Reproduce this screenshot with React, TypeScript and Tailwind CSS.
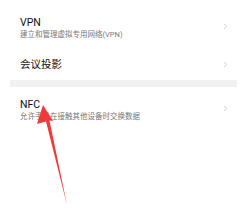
import React from 'react';

const Chevron = () => (
  <svg width="5" height="7" viewBox="0 0 5 7" className="shrink-0">
    <path d="M1 1 L3.8 3.5 L1 6" fill="none" stroke="#d4d4d4" strokeWidth="1" />
  </svg>
);

const App: React.FC = () => {
  return (
    <div
      className="relative w-[252px] h-[212px] overflow-hidden bg-white"
      style={{ fontFamily: '"Roboto", "Noto Sans CJK SC", sans-serif' }}
    >
      {/* VPN */}
      <div className="flex h-[48px] items-start justify-between pl-[20px] pr-[24px] pt-[16px]">
        <div className="flex flex-col">
          <span className="text-[10.5px] leading-[13px] text-[#111]">VPN</span>
          <span className="mt-[1px] text-[7.5px] leading-[10px] text-[#777]">建立和管理虚拟专用网络(VPN)</span>
        </div>
        <div className="pt-[7px]">
          <Chevron />
        </div>
      </div>

      {/* 会议投影 */}
      <div className="flex h-[32px] items-center justify-between pl-[20px] pr-[24px]">
        <span className="text-[10.5px] leading-[13px] text-[#111]">会议投影</span>
        <Chevron />
      </div>

      {/* divider band */}
      <div className="mx-[10px] h-[7px] w-[227px] bg-[#f1f1f1]" />

      {/* NFC */}
      <div className="flex items-start justify-between pl-[20px] pr-[24px] pt-[11px]">
        <div className="flex flex-col">
          <span className="text-[10.5px] leading-[13px] text-[#111]">NFC</span>
          <span className="mt-[1px] text-[7.5px] leading-[10px] text-[#777]">允许手机在接触其他设备时交换数据</span>
        </div>
        <div className="pt-[7px]">
          <Chevron />
        </div>
      </div>

      {/* red arrow annotation */}
      <svg className="absolute left-0 top-0" width="252" height="212" viewBox="0 0 252 212">
        <polygon
          points="43,105 53,121 49.5,120.5 67,205 46,121.5 37,124"
          fill="#f03a3a"
        />
      </svg>
    </div>
  );
};

export default App;
